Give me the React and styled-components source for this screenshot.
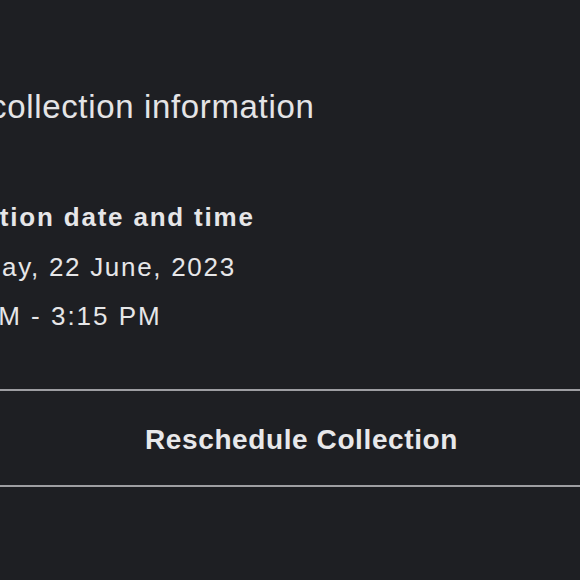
import React from "react";
import styled, { createGlobalStyle } from "styled-components";

const Global = createGlobalStyle`
  html, body {
    margin: 0;
    padding: 0;
    background: #1e1f23;
    overflow: hidden;
  }
  body {
    font-family: "Liberation Sans", Arial, Helvetica, sans-serif;
    -webkit-font-smoothing: antialiased;
  }
`;

const Screen = styled.main`
  width: 781px;
  margin-left: -89px;
  padding-top: 87px;
  min-height: 580px;
  box-sizing: border-box;
  background: #1e1f23;
  color: #e6e6e8;
  display: flex;
  flex-direction: column;
`;

const Content = styled.section`
  display: flex;
  flex-direction: column;
`;

const Title = styled.h1`
  margin: 0;
  font-size: 33px;
  line-height: 40px;
  font-weight: 400;
  letter-spacing: 0.65px;
  color: #e4e4e6;
  white-space: nowrap;
`;

const Details = styled.div`
  margin-top: 74px;
  display: flex;
  flex-direction: column;
`;

const Label = styled.h2`
  margin: 0 0 10px;
  font-size: 26px;
  line-height: 32px;
  font-weight: 700;
  letter-spacing: 1.8px;
  color: #e6e6e8;
  white-space: nowrap;
`;

const Value = styled.p`
  margin: 0;
  font-size: 26px;
  line-height: 49px;
  font-weight: 400;
  letter-spacing: ${(p) => p.$tracking || "1.7px"};
  color: #e6e6e8;
  white-space: nowrap;
`;

const ActionButton = styled.button`
  margin-top: 48px;
  height: 98px;
  width: 100%;
  padding: 3px 0 0;
  background: transparent;
  border: none;
  border-top: 2px solid #9e9ea2;
  border-bottom: 2px solid #9e9ea2;
  display: flex;
  align-items: center;
  justify-content: center;
  font-family: inherit;
  font-size: 28px;
  font-weight: 700;
  letter-spacing: 0.6px;
  color: #e8e8ea;
  cursor: pointer;
`;

export default function App() {
  return (
    <>
      <Global />
      <Screen>
        <Content>
          <Title>Your collection information</Title>
          <Details>
            <Label>Collection date and time</Label>
            <Value>Thursday, 22 June, 2023</Value>
            <Value $tracking="2px">2:15 PM - 3:15 PM</Value>
          </Details>
        </Content>
        <ActionButton>Reschedule Collection</ActionButton>
      </Screen>
    </>
  );
}
